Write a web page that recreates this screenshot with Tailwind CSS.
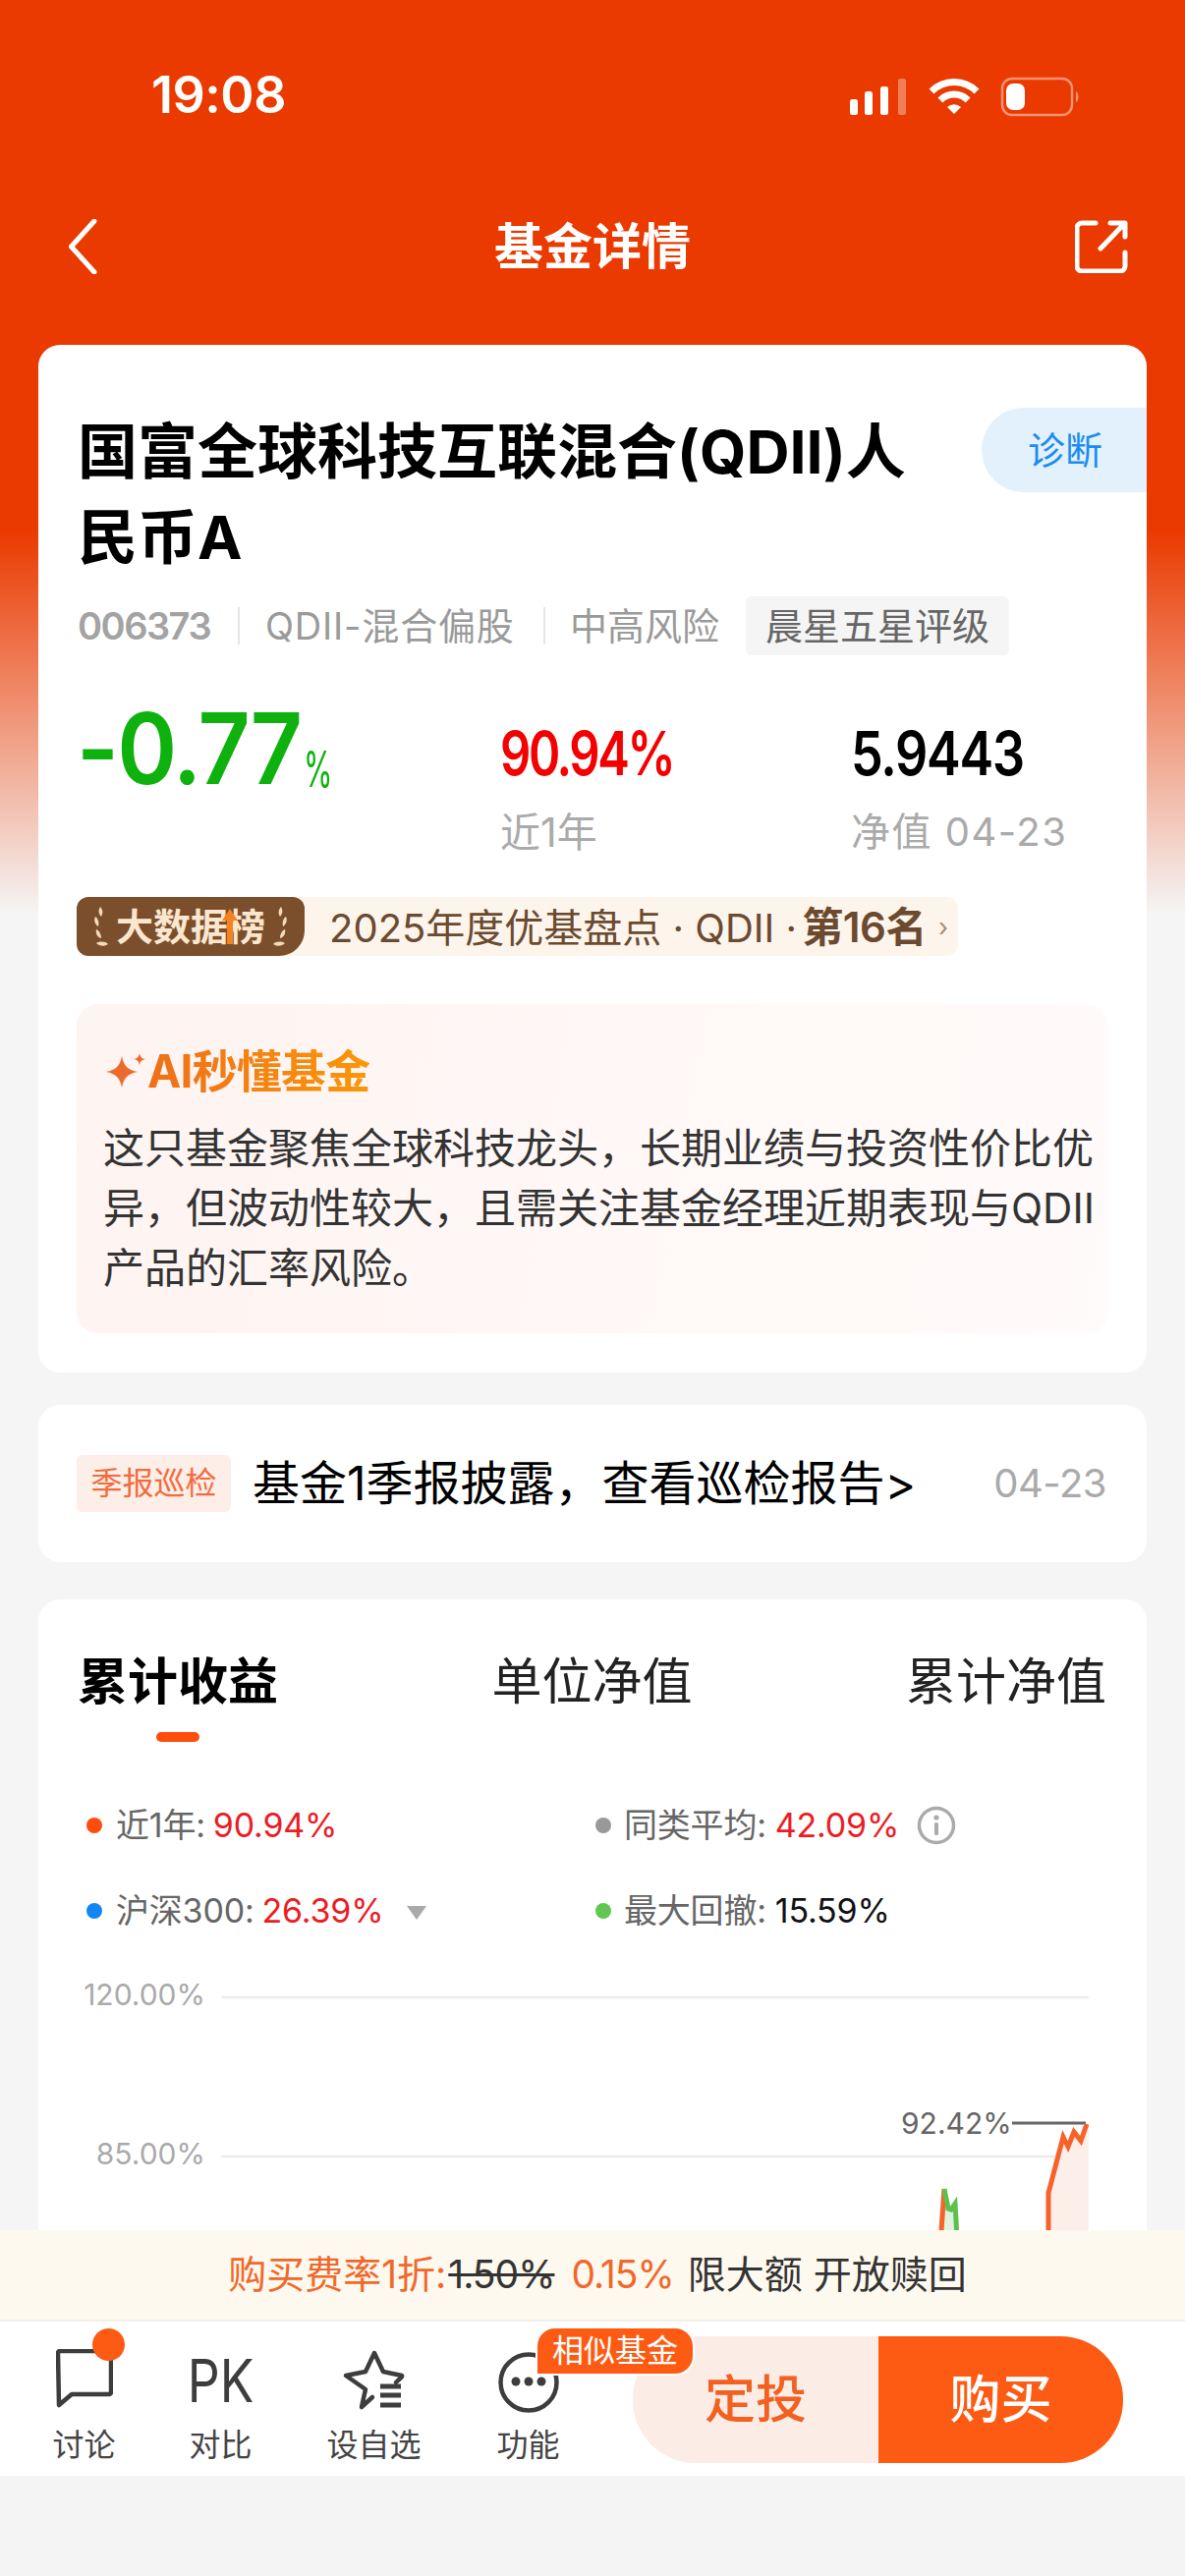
<!DOCTYPE html>
<html lang="zh">
<head>
<meta charset="utf-8">
<script src="https://cdn.jsdelivr.net/npm/@tailwindcss/browser@4"></script>
</head>
<body class="m-0">
<div class="relative w-[1206px] h-[2622px] overflow-hidden font-['Inter','Noto_Sans_CJK_SC',sans-serif] bg-[linear-gradient(180deg,#ea3a00_0px,#ea3a00_540px,#f5f5f5_930px)]">

  <!-- status bar -->
  <div class="h-[196px] pt-[66px] pl-[154px] pr-[107px] flex justify-between items-start">
    <span class="text-white text-[52px] leading-[62px] font-semibold tracking-[-0.5px]">19:08</span>
    <svg class="mt-[12px]" width="234" height="42" viewBox="0 0 234 42">
      <rect x="0" y="23" width="8" height="16" rx="2.5" fill="#fff"/>
      <rect x="15" y="15" width="8" height="24" rx="2.5" fill="#fff"/>
      <rect x="31" y="10" width="8" height="29" rx="2.5" fill="#fff"/>
      <rect x="49" y="2" width="8" height="37" rx="2.5" fill="#fff" fill-opacity=".35"/>
      <path d="M83 15A32.500 32.500 0 0 1 129 15M91.900 23.900A20 20 0 0 1 120.100 23.900" fill="none" stroke="#fff" stroke-width="7"/>
      <path d="M106 38 99 31A10 10 0 0 1 113 31Z" fill="#fff"/>
      <rect x="155" y="2" width="71" height="37" rx="10" fill="none" stroke="#fff" stroke-opacity=".45" stroke-width="2.500"/>
      <rect x="159" y="7" width="19" height="27" rx="7" fill="#fff"/>
      <path d="M230 15c3 1 3.500 10 0 11z" fill="#fff" fill-opacity=".45"/>
    </svg>
  </div>

  <!-- nav -->
  <div class="h-[155px] pb-[45px] pl-[69px] pr-[58px] flex items-center justify-between">
    <div class="w-[43px]"><svg width="30" height="56" viewBox="0 0 30 56" fill="none"><path d="M27 2 3.500 28 27 54" stroke="#fff" stroke-width="5" stroke-linecap="round" stroke-linejoin="round"/></svg></div>
    <span class="text-white text-[50px] leading-[60px] font-bold">基金详情</span>
    <svg width="54" height="54" viewBox="0 0 54 54" fill="none"><path d="M21 3H7a5 5 0 0 0-5 5v39a5 5 0 0 0 5 5h39a5 5 0 0 0 5-5V33" stroke="#fff" stroke-width="5" stroke-linecap="round"/><path d="M26 29 50 4M36 3h15v14" stroke="#fff" stroke-width="5" stroke-linecap="round" stroke-linejoin="round"/></svg>
  </div>

  <!-- fund card -->
  <div class="relative mx-[39px] h-[1046px] bg-white rounded-[22px] px-[41px] pt-[66px]">
    <div class="absolute right-0 top-[64px] w-[168px] h-[86px] bg-[#e3f1fc] rounded-l-[43px] flex items-center pl-[47px] text-[38px] text-[#1c8df0]">诊断</div>
    <h1 class="-ml-[1px] w-[900px] text-[61px] leading-[87px] font-bold text-black">国富全球科技互联混合(QDII)人<br>民币A</h1>
    <div class="mt-[16px] -ml-[1px] flex items-center h-[60px] text-[38px] text-[#9a9a9a]">
      <span class="font-semibold text-[#a3a3a3] w-[134px] tracking-[-1.500px]">006373</span>
      <span class="ml-[29px] w-[2px] h-[38px] bg-[#e5e5e5]"></span>
      <span class="ml-[26px] w-[254px] whitespace-nowrap tracking-[0.8px]">QDII-混合偏股</span>
      <span class="ml-[29px] w-[2px] h-[38px] bg-[#e5e5e5]"></span>
      <span class="ml-[25px]">中高风险</span>
      <span class="ml-[27px] h-[60px] px-[20px] rounded-[6px] bg-[#f5f5f5] text-[#666] flex items-center">晨星五星评级</span>
    </div>
    <div class="relative mt-[34px] h-[170px]">
      <div class="absolute -left-[2px] top-0 text-[100px] leading-[121px] font-semibold tracking-[-2px] text-[#0fb10f] origin-left scale-x-[0.925]">-0.77</div>
      <div class="absolute left-[229px] top-[52px] text-[50px] leading-[60px] text-[#0fb10f] origin-left scale-x-[0.6]">%</div>
      <div class="absolute left-[429px] top-[30px]">
        <div class="text-[62px] leading-[72px] font-semibold text-[#f50000] tracking-[-3px] origin-left scale-x-[0.79]">90.94%</div>
        <div class="mt-[18px] text-[41px] leading-[52px] text-[#aaa]">近1年</div>
      </div>
      <div class="absolute left-[786px] top-[30px]">
        <div class="text-[62px] leading-[72px] font-semibold text-black tracking-[-1.500px] origin-left scale-x-[0.84]">5.9443</div>
        <div class="mt-[18px] text-[40px] leading-[52px] text-[#aaa] whitespace-nowrap tracking-[1.500px]">净值 04-23</div>
      </div>
    </div>
    <div class="mt-[42px] w-[897px] h-[60px] -ml-[2px] flex items-center bg-[#fdf5ec] rounded-[12px]">
      <div class="w-[232px] h-[60px] shrink-0 flex items-center justify-center gap-[6px] bg-[#7b4f2b] rounded-l-[12px] rounded-tr-[12px] rounded-br-[26px] text-[#fbe7d0] text-[38px] font-semibold">
        <svg width="20" height="48" viewBox="0 0 20 48" fill="#f3d9bd"><path d="M10 4c3 3 3 7 1 10-3-3-3-7-1-10ZM5 14c3 2 4 6 3 10-3-2-5-6-3-10ZM6 27c3 1 5 5 5 9-4-1-6-5-5-9ZM18 42c-4 3-9 2-12-1 4-2 9-2 12 1Z"/></svg>
        <span class="relative whitespace-nowrap">大数据榜<svg class="absolute left-[108px] top-[10px]" width="16" height="36" viewBox="0 0 16 36"><path d="M8 0 16 12H11V36H5V12H0Z" fill="#f5821f"/></svg></span>
        <svg width="20" height="48" viewBox="0 0 20 48" fill="#f3d9bd"><path d="M10 4c-3 3-3 7-1 10 3-3 3-7 1-10ZM15 14c-3 2-4 6-3 10 3-2 5-6 3-10ZM14 27c-3 1-5 5-5 9 4-1 6-5 5-9ZM2 42c4 3 9 2 12-1-4-2-9-2-12 1Z"/></svg>
      </div>
      <span class="ml-[25px] text-[40px] text-[#6b4a30] whitespace-nowrap">2025年度优基盘点 · QDII · <b class="-ml-[6px] text-[42px] font-semibold tracking-[-0.5px]">第16名</b></span>
      <span class="ml-[12px] text-[26px] text-[#a98b72]">›</span>
    </div>
    <div class="mt-[49px] -ml-[2px] w-[1050px] h-[335px] rounded-[22px] bg-[linear-gradient(100deg,#fef4f1_0%,#fffbfa_100%)] pl-[27px] pt-[38px]">
      <div class="flex items-center h-[60px] gap-0">
        <svg class="ml-[3px]" width="42" height="40" viewBox="0 0 42 40"><path d="M16 5c2 10 6 14 16 16-10 2-14 6-16 16-2-10-6-14-16-16 10-2 14-6 16-16Z" fill="#ee6a2c"/><path d="M34 2c.8 4 2.500 5.500 6 6-3.500.8-5.200 2-6 6-.8-4-2.500-5.200-6-6 3.500-.5 5.200-2 6-6Z" fill="#ee6a2c"/></svg>
        <span class="text-[46px] font-bold leading-[60px] tracking-[-0.8px] text-transparent bg-clip-text bg-[linear-gradient(90deg,#ef6f1a,#fb9708)]">AI秒懂基金</span>
      </div>
      <p class="mt-[18px] w-[1010px] text-[42px] leading-[61px] text-[#333]">这只基金聚焦全球科技龙头，长期业绩与投资性价比优异，但波动性较大，且需关注基金经理近期表现与QDII产品的汇率风险。</p>
    </div>
  </div>

  <!-- notice card -->
  <div class="mt-[33px] mx-[39px] h-[160px] bg-white rounded-[22px] pl-[39px] pr-[41px] flex items-center">
    <span class="w-[157px] h-[58px] rounded-[6px] bg-[#fdeee8] text-[#f26b3c] text-[32px] flex items-center justify-center">季报巡检</span>
    <span class="ml-[22px] text-[48px] text-black whitespace-nowrap">基金1季报披露，查看巡检报告&gt;</span>
    <span class="ml-auto text-[40px] text-[#aaa] tracking-[-0.5px]">04-23</span>
  </div>

  <!-- chart card -->
  <div class="mt-[38px] mx-[39px] h-[900px] bg-white rounded-t-[22px] relative">
    <div class="pt-[51px] pl-[40px] pr-[41px] flex justify-between text-[51px] leading-[66px] text-[#222]">
      <span class="relative font-bold text-black">累计收益<span class="absolute left-[80px] top-[84px] w-[44px] h-[10px] rounded-full bg-[#ff4d0d]"></span></span>
      <span>单位净值</span>
      <span>累计净值</span>
    </div>
    <div class="absolute left-[49px] top-[204px] grid grid-cols-[518px_1fr] gap-y-[35px] text-[34px] leading-[52px] text-[#666] tracking-[-0.2px]">
      <div class="flex items-center"><i class="w-[16px] h-[16px] rounded-full bg-[#ff4d0d] mr-[14px]"></i>近1年:<span class="ml-[8px] text-[#ec1c24]">90.94%</span></div>
      <div class="flex items-center"><i class="w-[16px] h-[16px] rounded-full bg-[#999] mr-[13px]"></i>同类平均:<span class="ml-[9px] text-[#ec1c24]">42.09%</span>
        <svg class="ml-[18px]" width="40" height="40" viewBox="0 0 40 40" fill="none"><circle cx="20" cy="20" r="17.500" stroke="#aaa" stroke-width="3.500"/><circle cx="20" cy="12" r="2.600" fill="#aaa"/><rect x="18" y="17" width="4" height="13" rx="1.500" fill="#aaa"/></svg></div>
      <div class="flex items-center"><i class="w-[16px] h-[16px] rounded-full bg-[#1485f5] mr-[14px]"></i>沪深300:<span class="ml-[8px] text-[#ec1c24]">26.39%</span>
        <svg class="ml-[24px] mt-[4px]" width="20" height="14" viewBox="0 0 20 14"><path d="M0 0H20L10 14Z" fill="#aaa"/></svg></div>
      <div class="flex items-center"><i class="w-[16px] h-[16px] rounded-full bg-[#62c554] mr-[13px]"></i>最大回撤:<span class="ml-[9px] text-[#111]">15.59%</span></div>
    </div>
    <!-- plot -->
    <div class="absolute left-0 top-[385px] w-[1129px] h-[300px]">
      <span class="absolute right-[959px] top-[-1px] text-[30px] leading-[36px] text-[#aaa]">120.00%</span>
      <span class="absolute right-[959px] top-[161px] text-[30px] leading-[36px] text-[#aaa]">85.00%</span>
      <span class="absolute left-[878px] top-[130px] text-[30px] leading-[36px] text-[#666]">92.42%</span>
      <svg class="absolute left-0 top-0" width="1129" height="300" viewBox="0 0 1129 300" fill="none">
        <path d="M186 20H1069M186 182H1069" stroke="#ececec" stroke-width="2.500"/>
        <path d="M991 148H1066" stroke="#666" stroke-width="3"/>
        <path d="M1028 300V219L1043 162 1048 172 1054 157 1061 166 1067 149 1069 149V300Z" fill="#fceee9"/>
        <path d="M922 215 926 235 929 236 933 230 937 300H916Z" fill="#dff2dc"/>
        <path d="M916 300 922 215" stroke="#f8622a" stroke-width="5"/>
        <path d="M922 215 926 235 929 236 933 230 937 300" stroke="#5cc04f" stroke-width="5"/>
        <path d="M1028 300V219L1043 162 1048 172 1054 157 1061 166 1067 149" stroke="#f8622a" stroke-width="5"/>
      </svg>
    </div>
  </div>

  <!-- fee bar -->
  <div class="absolute left-0 top-[2270px] w-full h-[93px] pl-[10px] bg-[#fef9ee] border-b-2 border-[#f2efe8] flex items-center justify-center text-[39px] text-[#333] whitespace-nowrap">
    <span class="text-[#f0682b]">购买费率1折:</span>
    <span class="ml-[2px] line-through tracking-[-1px]">1.50%</span>
    <span class="ml-[17px] text-[#f0682b] tracking-[-1px]">0.15%</span>
    <span class="ml-[14px]">限大额 开放赎回</span>
  </div>

  <!-- bottom bar -->
  <div class="absolute left-0 top-[2363px] w-full h-[157px] bg-white">
    <div class="absolute left-[27px] top-0 w-[117px] flex flex-col items-center">
      <div class="relative h-[100px] w-full">
        <svg class="absolute left-[30px] top-[28px]" width="58" height="60" viewBox="0 0 58 60" fill="none"><path d="M2 4a2 2 0 0 1 2-2h50a2 2 0 0 1 2 2v40a2 2 0 0 1-2 2H16L3 57Z" stroke="#3d3d3d" stroke-width="4.500" stroke-linejoin="round"/></svg>
        <span class="absolute left-[67px] top-[7px] w-[33px] h-[33px] rounded-full bg-[#fd5b13]"></span>
      </div>
      <span class="text-[32px] leading-[52px] text-[#444]">讨论</span>
    </div>
    <div class="absolute left-[166px] top-0 w-[117px] flex flex-col items-center">
      <div class="h-[100px] w-full flex items-center justify-center pt-[20px] text-[60px] leading-[70px] text-[#3d3d3d] scale-x-[0.86]">PK</div>
      <span class="text-[32px] leading-[52px] text-[#444]">对比</span>
    </div>
    <div class="absolute left-[322px] top-0 w-[117px] flex flex-col items-center">
      <div class="h-[100px] w-full flex items-center justify-center pt-[20px]">
        <svg width="66" height="62" viewBox="0 0 66 62" fill="none"><path d="M31 48 20 58l4-18L4 26l20-4L33 3l9 19 19 4c1 1-3 4-6 7" stroke="#3d3d3d" stroke-width="4.500" stroke-linecap="round" stroke-linejoin="round"/><path d="M39 37h21M39 46h21M39 56h21" stroke="#3d3d3d" stroke-width="5"/></svg>
      </div>
      <span class="text-[32px] leading-[52px] text-[#444] whitespace-nowrap">设自选</span>
    </div>
    <div class="absolute left-[479px] top-0 w-[117px] flex flex-col items-center">
      <div class="h-[100px] w-full flex items-center justify-center pt-[24px]">
        <svg width="62" height="62" viewBox="0 0 62 62" fill="none"><circle cx="31" cy="31" r="28.500" stroke="#3d3d3d" stroke-width="4.500"/><circle cx="18" cy="30" r="4.500" fill="#3d3d3d"/><circle cx="31" cy="30" r="4.500" fill="#3d3d3d"/><circle cx="44" cy="30" r="4.500" fill="#3d3d3d"/></svg>
      </div>
      <span class="text-[32px] leading-[52px] text-[#444]">功能</span>
    </div>
    <div class="absolute left-[644px] top-[15px] flex h-[129px] w-[499px] rounded-[64px] overflow-hidden text-[52px] font-medium">
      <span class="w-[250px] bg-[#fcece6] text-[#f2611f] flex items-center justify-center">定投</span>
      <span class="w-[249px] bg-[#fd5b13] text-white flex items-center justify-center">购买</span>
    </div>
    <span class="absolute left-[545px] top-[5px] w-[162px] h-[50px] box-border border-2 border-white bg-[#fd5b13] rounded-t-[20px] rounded-br-[20px] text-white text-[32px] flex items-center justify-center whitespace-nowrap">相似基金</span>
  </div>
  <div class="absolute left-0 top-[2520px] w-full h-[102px] bg-[#f4f4f4]"></div>
</div>
</body>
</html>
